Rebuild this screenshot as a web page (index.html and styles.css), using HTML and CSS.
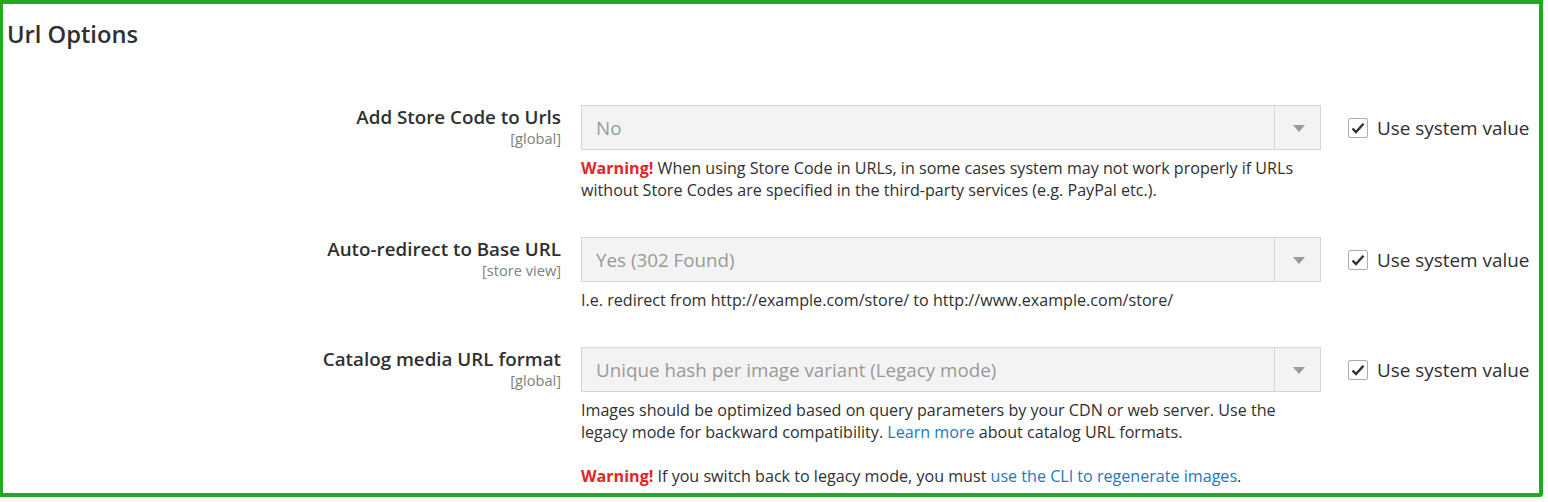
FILE: index.html
```html
<!DOCTYPE html>
<html lang="en">
<head>
  <meta charset="UTF-8">
  <title>Url Options</title>
  <link rel="stylesheet" href="styles.css">
</head>
<body>

  <div class="section">
    <div class="section-title">Url Options</div>

    <div class="row">
      <div class="label">
        <span>Add Store Code to Urls</span>
        <span class="scope">[global]</span>
      </div>
      <div class="value">
        <div class="select">
          <span class="select-text">No</span>
          <span class="select-arrow"></span>
        </div>
        <p class="note"><span class="warn">Warning!</span> When using Store Code in URLs, in some cases system may not work properly if URLs without Store Codes are specified in the third-party services (e.g. PayPal etc.).</p>
      </div>
      <label class="use-default">
        <span class="checkbox"><svg width="14" height="12" viewBox="0 0 14 12"><path d="M1.5 6.5 L5 10 L12.5 1.8" fill="none" stroke="#303030" stroke-width="2.4"/></svg></span>
        Use system value
      </label>
    </div>

    <div class="row">
      <div class="label">
        <span>Auto-redirect to Base URL</span>
        <span class="scope">[store view]</span>
      </div>
      <div class="value">
        <div class="select">
          <span class="select-text">Yes (302 Found)</span>
          <span class="select-arrow"></span>
        </div>
        <p class="note">I.e. redirect from http://example.com/store/ to http://www.example.com/store/</p>
      </div>
      <label class="use-default">
        <span class="checkbox"><svg width="14" height="12" viewBox="0 0 14 12"><path d="M1.5 6.5 L5 10 L12.5 1.8" fill="none" stroke="#303030" stroke-width="2.4"/></svg></span>
        Use system value
      </label>
    </div>

    <div class="row">
      <div class="label">
        <span>Catalog media URL format</span>
        <span class="scope">[global]</span>
      </div>
      <div class="value">
        <div class="select">
          <span class="select-text">Unique hash per image variant (Legacy mode)</span>
          <span class="select-arrow"></span>
        </div>
        <p class="note">Images should be optimized based on query parameters by your CDN or web server. Use the legacy mode for backward compatibility. <a href="#">Learn more</a> about catalog URL formats.<br><br><span class="warn">Warning!</span> If you switch back to legacy mode, you must <a href="#">use the CLI to regenerate images</a>.</p>
      </div>
      <label class="use-default">
        <span class="checkbox"><svg width="14" height="12" viewBox="0 0 14 12"><path d="M1.5 6.5 L5 10 L12.5 1.8" fill="none" stroke="#303030" stroke-width="2.4"/></svg></span>
        Use system value
      </label>
    </div>
  </div>

</body>
</html>
```

FILE: styles.css
```css
body {
  margin: 0;
  padding: 0;
  background: #ffffff;
  font-family: 'Open Sans', 'Liberation Sans', sans-serif;
  color: #303030;
}

.section {
  box-sizing: border-box;
  width: 1543px;
  height: 497px;
  border: 4px solid #21a921;
  border-left-width: 3px;
  border-radius: 0 0 3px 0;
  padding: 16px 0 0 4px;
  overflow: hidden;
}

.section-title {
  font-size: 23.7px;
  font-weight: 600;
  line-height: 28px;
  margin-bottom: 57px;
}

/* une ligne de configuration */
.row {
  display: flex;
  align-items: flex-start;
  margin-bottom: 35.6px;
}

.label {
  width: 554px;
  flex: none;
  text-align: right;
  font-size: 18.8px;
  font-weight: 600;
  line-height: 22px;
  padding-top: 1px;
}

.scope {
  display: block;
  font-size: 14.6px;
  font-weight: 400;
  line-height: 18px;
  margin-top: 1px;
  color: #808080;
}

.value {
  width: 740px;
  flex: none;
  margin-left: 20px;
}

.select {
  display: flex;
  height: 45px;
  box-sizing: border-box;
  border: 1px solid #d6d6d6;
  background: #f3f3f3;
}

.select-text {
  flex: 1;
  padding: 1px 0 0 14px;
  font-size: 18.8px;
  line-height: 43px;
  color: #999999;
}

.select-arrow {
  width: 45px;
  border-left: 1px solid #d6d6d6;
  position: relative;
}

.select-arrow::after {
  content: "";
  position: absolute;
  left: 18px;
  top: 19px;
  border-left: 6px solid transparent;
  border-right: 6px solid transparent;
  border-top: 7px solid #9a9a9a;
}

.note {
  margin: 7px 0 0 0;
  font-size: 16.1px;
  line-height: 22.2px;
}

.note a {
  color: #1979c3;
  text-decoration: none;
}

.warn {
  color: #e22626;
  font-weight: 700;
}

.use-default {
  display: flex;
  align-items: center;
  gap: 9px;
  margin-left: 27px;
  padding-top: 12px;
  font-size: 18.9px;
  line-height: 22px;
  white-space: nowrap;
}

.checkbox {
  width: 20px;
  height: 20px;
  box-sizing: border-box;
  border: 1px solid #adadad;
  border-radius: 2px;
  display: flex;
  align-items: center;
  justify-content: center;
}
```
